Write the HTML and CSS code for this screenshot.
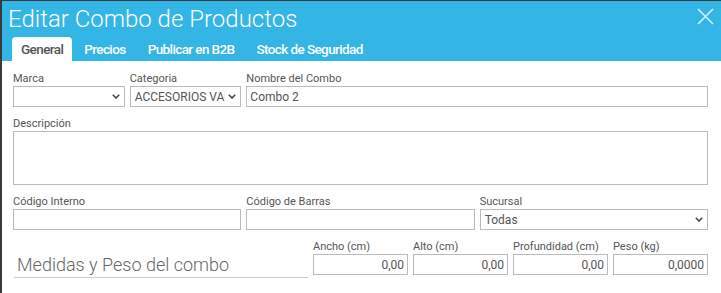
FILE: index.html
```html
<!DOCTYPE html>
<html lang="es">
<head>
    <meta charset="UTF-8">
    <title>Editar Combo de Productos</title>
    <link rel="stylesheet" href="styles.css">
</head>
<body>
    <div class="modal">
        <div class="modal-header">
            <div class="modal-title">Editar Combo de Productos</div>
            <button class="close-btn" type="button">
                <svg width="17" height="17" viewBox="0 0 17 17">
                    <path d="M1 1 L16 16 M16 1 L1 16" stroke="#d6f0fb" stroke-width="1.6" fill="none"/>
                </svg>
            </button>
            <div class="tabs">
                <div class="tab active">General</div>
                <div class="tab">Precios</div>
                <div class="tab">Publicar en B2B</div>
                <div class="tab">Stock de Seguridad</div>
            </div>
        </div>

        <div class="modal-body">
            <div class="row row-3">
                <div class="field-pair">
                    <div class="field">
                        <label>Marca</label>
                        <div class="select-wrap">
                            <select class="control"><option></option></select>
                            <svg class="chevron" width="8" height="5" viewBox="0 0 8 5"><path d="M0.8 0.8 L4 4 L7.2 0.8" stroke="#444" stroke-width="1.6" fill="none"/></svg>
                        </div>
                    </div>
                    <div class="field">
                        <label>Categoria</label>
                        <div class="select-wrap">
                            <select class="control"><option>ACCESORIOS VARIOS</option></select>
                            <svg class="chevron" width="8" height="5" viewBox="0 0 8 5"><path d="M0.8 0.8 L4 4 L7.2 0.8" stroke="#444" stroke-width="1.6" fill="none"/></svg>
                        </div>
                    </div>
                </div>
                <div class="field span-2">
                    <label>Nombre del Combo</label>
                    <input class="control" type="text" value="Combo 2">
                </div>
            </div>

            <div class="field">
                <label>Descripción</label>
                <textarea class="control area"></textarea>
            </div>

            <div class="row row-3">
                <div class="field">
                    <label>Código Interno</label>
                    <input class="control" type="text">
                </div>
                <div class="field">
                    <label>Código de Barras</label>
                    <input class="control" type="text">
                </div>
                <div class="field">
                    <label>Sucursal</label>
                    <div class="select-wrap">
                        <select class="control"><option>Todas</option></select>
                        <svg class="chevron" width="8" height="5" viewBox="0 0 8 5"><path d="M0.8 0.8 L4 4 L7.2 0.8" stroke="#444" stroke-width="1.6" fill="none"/></svg>
                    </div>
                </div>
            </div>

            <div class="row row-measures">
                <div class="section-title">Medidas y Peso del combo</div>
                <div class="field">
                    <label>Ancho (cm)</label>
                    <input class="control num" type="text" value="0,00">
                </div>
                <div class="field">
                    <label>Alto (cm)</label>
                    <input class="control num" type="text" value="0,00">
                </div>
                <div class="field">
                    <label>Profundidad (cm)</label>
                    <input class="control num" type="text" value="0,00">
                </div>
                <div class="field">
                    <label>Peso (kg)</label>
                    <input class="control num" type="text" value="0,0000">
                </div>
            </div>
        </div>
    </div>
</body>
</html>
```

FILE: styles.css
```css
* {
    margin: 0;
    padding: 0;
    box-sizing: border-box;
}

body {
    font-family: Roboto, "Noto Sans", sans-serif;
    background: #3b3b3b;
    padding: 1px 0 0 2px;
    height: 100vh;
    overflow: hidden;
}

.modal {
    background: #fff;
    height: 100%;
}

.modal-header {
    position: relative;
    background: #33b5e5;
    padding: 4px 0 0 6px;
}

.modal-title {
    color: #fff;
    font-size: 24px;
    font-weight: 300;
    line-height: 28px;
}

.close-btn {
    position: absolute;
    top: 7px;
    right: 7px;
    background: none;
    border: none;
    cursor: pointer;
}

.close-btn svg {
    display: block;
}

.tabs {
    display: flex;
    margin-top: 4px;
    padding-left: 4px;
}

.tab {
    font-weight: 500;
    font-size: 13.5px;
    letter-spacing: -0.6px;
    line-height: 24px;
    color: #fff;
    padding: 0 10px;
    margin-right: 2px;
    border-radius: 4px 4px 0 0;
}

.tab.active {
    background: #fff;
    color: #555;
    padding: 0 9px;
}

.modal-body {
    padding: 11px 13px 0 11px;
}

.row {
    display: grid;
    gap: 5px;
}

.row-3 {
    grid-template-columns: repeat(3, 1fr);
}

.span-2 {
    grid-column: span 2;
}

.field-pair {
    display: grid;
    grid-template-columns: 1fr 1fr;
    gap: 5px;
}

.field {
    margin-bottom: 10px;
}

.field label {
    display: block;
    font-size: 11px;
    line-height: 13px;
    color: #555;
    margin-bottom: 1px;
}

.control {
    display: block;
    width: 100%;
    height: 21px;
    border: 1px solid #bbb;
    border-radius: 0;
    background: #fff;
    font-family: Roboto, sans-serif;
    font-size: 12px;
    color: #555;
    padding: 0 3px;
    outline: none;
}

select.control {
    appearance: none;
    -webkit-appearance: none;
    padding: 0 15px 0 4px;
}

.select-wrap {
    position: relative;
}

.chevron {
    position: absolute;
    right: 5px;
    top: 8px;
}

.area {
    height: 54px;
    resize: none;
}

.num {
    text-align: right;
}

.row-measures {
    grid-template-columns: 1fr repeat(4, 95px);
    align-items: end;
}

.section-title {
    font-size: 18px;
    font-weight: 300;
    color: #666;
    line-height: 24px;
    padding-left: 3px;
    margin: 0 0 7px 1px;
    border-bottom: 1px solid #ccc;
}
```
